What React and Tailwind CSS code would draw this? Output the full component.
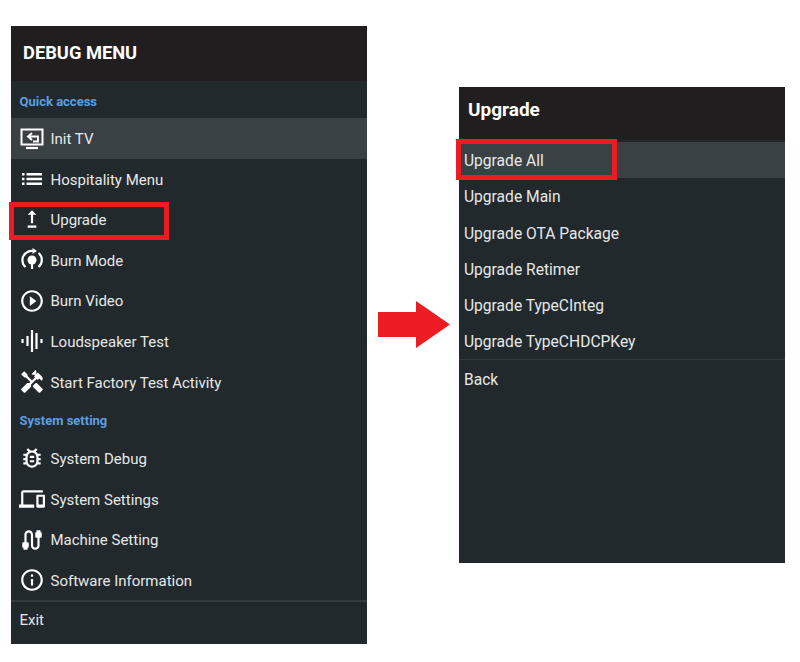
import { MdUpgrade, MdPlayCircleOutline, MdHandyman, MdOutlineBugReport, MdOutlineDevices, MdCable, MdInfoOutline } from 'react-icons/md'

function InitIcon() {
  return (
    <svg width="24" height="24" viewBox="0 0 24 24" fill="none" stroke="currentColor" strokeWidth="2">
      <path d="M1.500 3.500h21v15h-21z" />
      <path d="M6 22h12" strokeWidth="2.200" />
      <path d="M12 7l-4 3.500 4 3.500M8.500 10.500H18v5h-5" strokeWidth="1.900" />
    </svg>
  )
}

function ListIcon() {
  return (
    <svg width="24" height="24" viewBox="0 0 24 24" fill="currentColor">
      <path d="M2 6h2.500v2.500H2zM2 10.800h2.500v2.500H2zM2 15.500h2.500V18H2zM6.500 6H22v2.400H6.500zM6.500 10.800H22v2.400H6.500zM6.500 15.500H22v2.400H6.500z" />
    </svg>
  )
}

function BurnIcon() {
  return (
    <svg width="24" height="24" viewBox="0 0 24 24" fill="none" stroke="currentColor" strokeWidth="2.200">
      <path d="M5.500 19a9 9 0 0 1 .5-14 9 9 0 0 1 7-2" />
      <path d="M18.500 5a9 9 0 0 1 0 14" />
      <path d="M12.500 0l4.500 3-4.500 3z" fill="currentColor" stroke="none" />
      <circle cx="12" cy="12" r="4.500" fill="currentColor" stroke="none" />
      <path d="M12 15v6" />
    </svg>
  )
}

function WaveIcon() {
  return (
    <svg width="24" height="24" viewBox="0 0 24 24" fill="none" stroke="currentColor" strokeWidth="2.200">
      <path d="M2.500 10v4M7.500 7v10M12 1v22M16.500 4v16M21.500 10v4" />
    </svg>
  )
}

const quickItems = [
  { label: 'Init TV', icon: <InitIcon />, active: true },
  { label: 'Hospitality Menu', icon: <ListIcon /> },
  { label: 'Upgrade', icon: <MdUpgrade size={26} /> },
  { label: 'Burn Mode', icon: <BurnIcon /> },
  { label: 'Burn Video', icon: <MdPlayCircleOutline size={28} /> },
  { label: 'Loudspeaker Test', icon: <WaveIcon /> },
  { label: 'Start Factory Test Activity', icon: <MdHandyman size={26} /> },
]

const systemItems = [
  { label: 'System Debug', icon: <MdOutlineBugReport size={26} /> },
  { label: 'System Settings', icon: <MdOutlineDevices size={28} /> },
  { label: 'Machine Setting', icon: <MdCable size={26} /> },
  { label: 'Software Information', icon: <MdInfoOutline size={28} /> },
]

const upgradeItems = ['Upgrade All', 'Upgrade Main', 'Upgrade OTA Package', 'Upgrade Retimer', 'Upgrade TypeCInteg', 'Upgrade TypeCHDCPKey']

function MenuRow({ item }) {
  return (
    <div className={`h-[40.6px] flex items-center pl-2 gap-[5.5px] ${item.active ? 'bg-[#3a4144]' : ''}`}>
      <span className="w-[26px] h-[26px] flex items-center justify-center text-white">{item.icon}</span>
      <span className="text-[15px] text-[#e6e8e8] pt-[2px]">{item.label}</span>
    </div>
  )
}

export default function App() {
  return (
    <div className="w-[800px] h-[662px] bg-white flex items-start pl-[11px] font-['Roboto',sans-serif] overflow-hidden">
      <div className="relative w-[356px] h-[618px] mt-[26px] bg-[#22292d] flex flex-col">
        <div className="h-[55px] shrink-0 bg-[#201e1f] flex items-center px-3 pb-[2px]">
          <h1 className="text-[18.3px] font-bold text-white">DEBUG MENU</h1>
        </div>
        <div className="h-[37px] shrink-0 flex items-center pl-[8.5px] pt-[4px] text-[13px] font-bold text-[#5b9fe3]">Quick access</div>
        {quickItems.map((item) => <MenuRow key={item.label} item={item} />)}
        <div className="h-[36px] shrink-0 flex items-center pl-[8.5px] pt-[2px] text-[13px] font-bold text-[#5b9fe3]">System setting</div>
        {systemItems.map((item) => <MenuRow key={item.label} item={item} />)}
        <div className="mt-[-1px] border-t-2 border-[#343b3e] flex-1 flex items-center pl-[8.5px] pb-[5px] text-[15px] text-[#e6e8e8]">Exit</div>
        <div className="absolute left-[-2px] top-[176px] w-[160px] h-[38px] border-[5px] border-[#ed1c24]" />
      </div>

      <svg className="ml-[11px] mt-[301px] shrink-0" width="72" height="47" viewBox="0 0 72 47">
        <path d="M0 11h38V0l34 23.500L38 47V36H0z" fill="#ed1c24" />
      </svg>

      <div className="relative ml-[9px] w-[326px] h-[476px] mt-[87px] bg-[#22292d] flex flex-col">
        <div className="h-[53px] shrink-0 bg-[#201e1f] flex items-center px-[9px] pb-[6px]">
          <h2 className="text-[19px] font-bold text-white">Upgrade</h2>
        </div>
        <div className="pt-[2px]">
          {upgradeItems.map((label, i) => (
            <div key={label} className={`h-[36.3px] flex items-center pl-[5px] pt-[3px] text-[15.6px] text-[#e6e8e8] ${i === 0 ? 'bg-[#3a4144]' : ''}`}>{label}</div>
          ))}
        </div>
        <div className="mt-[-1px] border-t border-[#343b3e] h-[39px] flex items-center pl-[5px] pt-[3px] text-[15.6px] text-[#e6e8e8]">Back</div>
        <div className="absolute left-[-3px] top-[52px] w-[161px] h-[41px] border-[5px] border-[#ed1c24]" />
      </div>
    </div>
  )
}
